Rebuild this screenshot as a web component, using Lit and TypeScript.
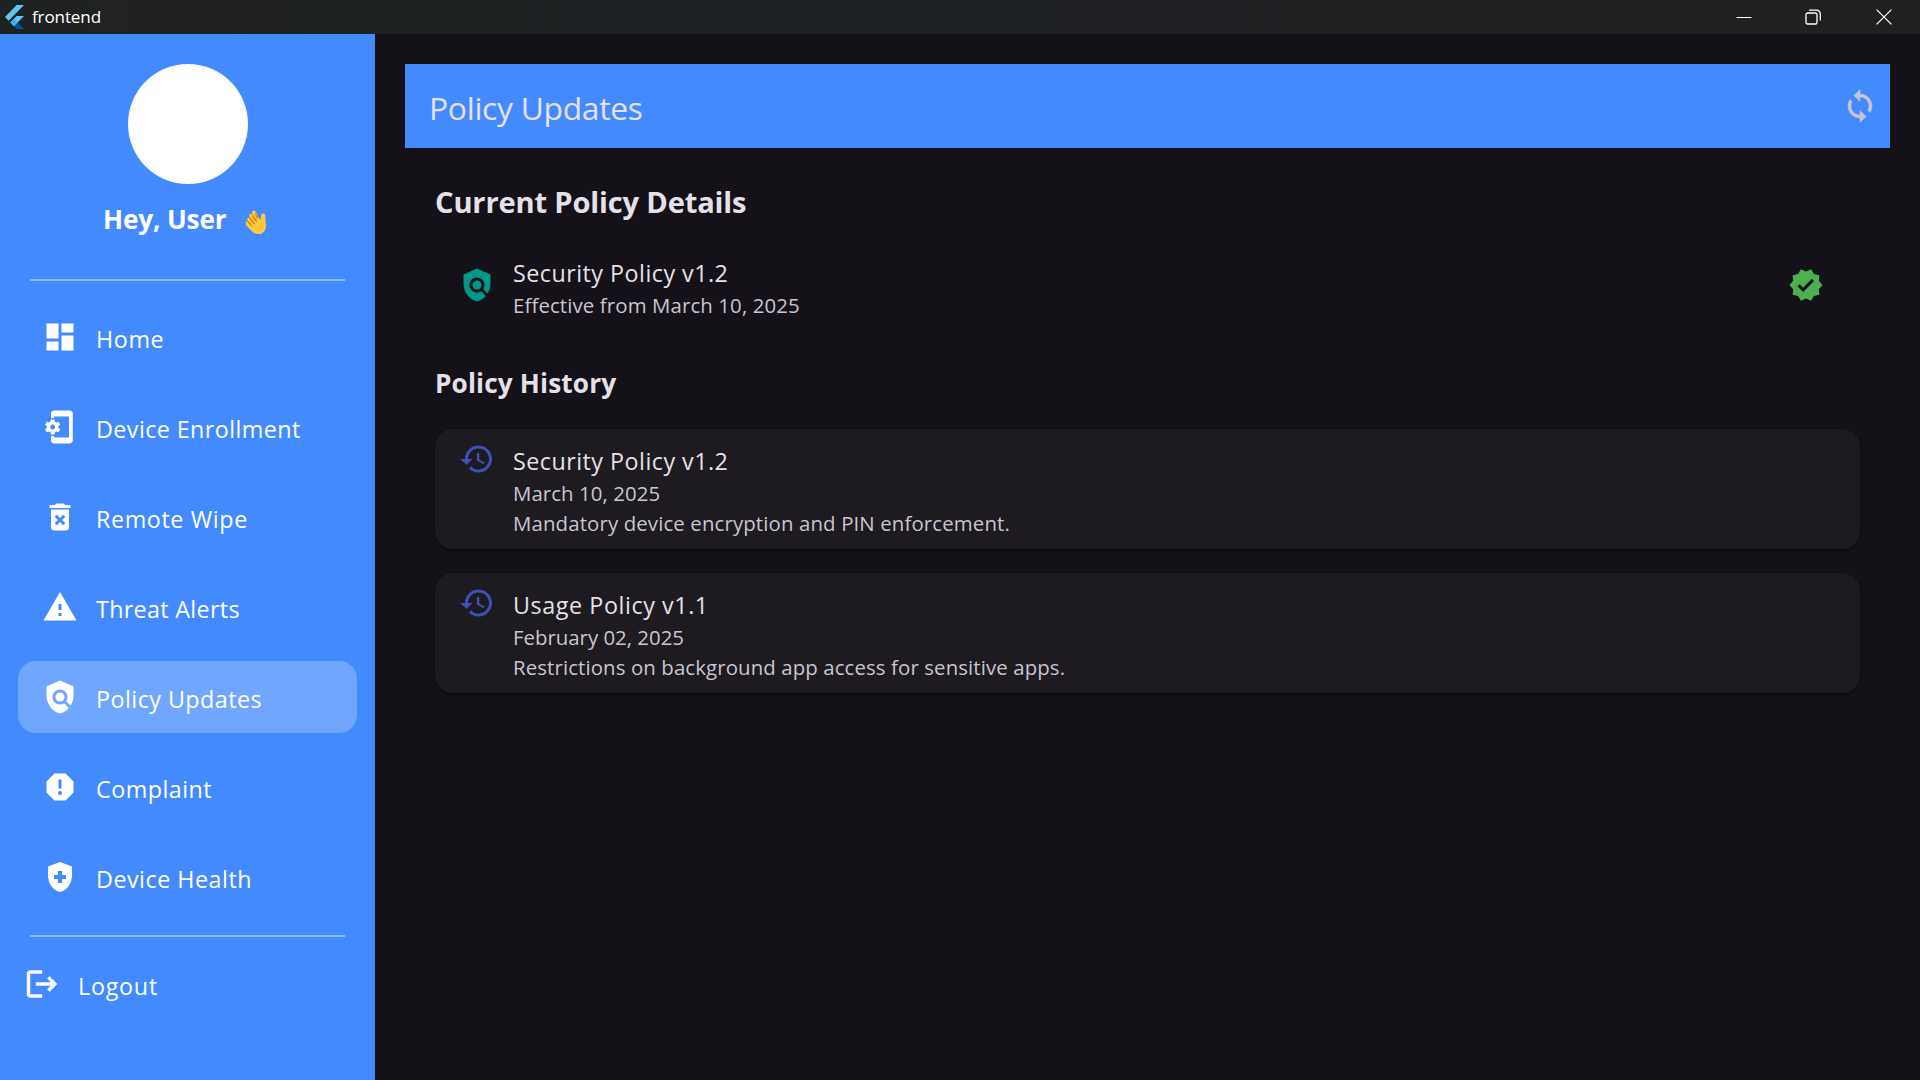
import { LitElement, html, css, svg, nothing } from "lit";
import { customElement, property, state } from "lit/decorators.js";
import { classMap } from "lit/directives/class-map.js";
import { styleMap } from "lit/directives/style-map.js";

const ICONS: Record<string, ReturnType<typeof svg>> = {
  dashboard: svg`<path d="M3 13h8V3H3v10zm0 8h8v-6H3v6zm10 0h8V11h-8v10zm0-18v6h8V3h-8z"/>`,
  phoneSetup: svg`<path d="M18.500 1H8c-1.100 0-2 .9-2 2v3h2V5h10v14H8v-1H6v3c0 1.100.9 2 2 2h10.500c1.100 0 2-.9 2-2V3c0-1.100-.9-2-2-2z"/><path transform="translate(-.9 0)" d="M11.8 12.5v-1l1.1-.8c.1-.1.1-.2.1-.3l-1-1.7c-.1-.1-.2-.2-.3-.1l-1.3.4c-.3-.2-.6-.4-.9-.5l-.2-1.3c0-.1-.1-.2-.3-.2H7c-.1 0-.2.1-.3.2l-.2 1.3c-.3.1-.6.3-.9.5l-1.3-.5c-.1 0-.2 0-.3.1l-1 1.7c-.1.1 0 .2.1.3l1.1.8v1l-1.1.9c-.1.1-.1.2-.1.3l1 1.7c.1.1.2.2.3.1l1.4-.4c.3.2.6.4.9.5l.2 1.3c-.1.1.1.2.2.2h2c.1 0 .2-.1.3-.2l.2-1.3c.3-.1.6-.3.9-.5l1.3.5c.1 0 .2 0 .3-.1l1-1.7c.1-.1 0-.2-.1-.3l-1.1-.9zM8 13.6c-.9 0-1.6-.7-1.6-1.6s.7-1.6 1.6-1.6 1.6.7 1.6 1.6-.7 1.6-1.6 1.6z"/>`,
  deleteForever: svg`<path d="M6 19c0 1.1.9 2 2 2h8c1.1 0 2-.9 2-2V7H6v12zm2.46-7.12l1.41-1.41L12 12.59l2.12-2.12 1.41 1.41L13.41 14l2.12 2.12-1.41 1.41L12 15.41l-2.12 2.12-1.41-1.41L10.59 14l-2.13-2.12zM15.5 4l-1-1h-5l-1 1H5v2h14V4z"/>`,
  warning: svg`<path d="M1 21h22L12 2 1 21zm12-3h-2v-2h2v2zm0-4h-2v-4h2v4z"/>`,
  policy: svg`<path d="M21 5l-9-4-9 4v6c0 5.55 3.84 10.74 9 12 2.3-.56 4.33-1.9 5.88-3.71l-3.12-3.12c-1.94 1.29-4.58 1.07-6.29-.64-1.95-1.95-1.95-5.12 0-7.07 1.95-1.95 5.12-1.95 7.07 0 1.71 1.71 1.92 4.35.64 6.29l2.9 2.9C20.29 15.69 21 13.38 21 11V5z"/><circle cx="12" cy="12" r="3"/>`,
  report: svg`<path d="M15.73 3H8.27L3 8.27v7.46L8.27 21h7.46L21 15.73V8.27L15.73 3zM12 17.3c-.72 0-1.3-.58-1.3-1.3 0-.72.58-1.3 1.3-1.3.72 0 1.3.58 1.3 1.3 0 .72-.58 1.3-1.3 1.3zm1-4.3h-2V7h2v6z"/>`,
  health: svg`<path fill-rule="evenodd" d="M12 2L4 5v6.09c0 5.05 3.41 9.76 8 10.91 4.59-1.15 8-5.86 8-10.91V5l-8-3zM10.6 8h2.8v2.6H16v2.8h-2.6V16h-2.8v-2.6H8v-2.8h2.6z"/>`,
  logout: svg`<path stroke="currentColor" stroke-width=".3" d="M17 7l-1.41 1.41L18.17 11H8v2h10.17l-2.58 2.58L17 17l5-5zM4 5h8V3H4c-1.1 0-2 .9-2 2v14c0 1.1.9 2 2 2h8v-2H4V5z"/>`,
  sync: svg`<path stroke="currentColor" stroke-width=".3" d="M12 4V1L8 5l4 4V6c3.31 0 6 2.69 6 6 0 1.01-.25 1.97-.7 2.8l1.46 1.46C19.54 15.03 20 13.57 20 12c0-4.42-3.58-8-8-8zm0 14c-3.31 0-6-2.69-6-6 0-1.01.25-1.97.7-2.8L5.24 7.74C4.46 8.97 4 10.43 4 12c0 4.42 3.58 8 8 8v3l4-4-4-4v3z"/>`,
  verified: svg`<path d="M23 12l-2.44-2.79.34-3.69-3.61-.82-1.89-3.2L12 2.96 8.6 1.5 6.71 4.69 3.1 5.5l.34 3.7L1 12l2.44 2.79-.34 3.7 3.61.82L8.6 22.5l3.4-1.47 3.4 1.46 1.89-3.19 3.61-.82-.34-3.69L23 12zm-12.91 4.72l-3.8-3.81 1.48-1.48 2.32 2.33 5.85-5.87 1.48 1.48-7.33 7.35z"/>`,
  history: svg`<path d="M13 3c-4.97 0-9 4.03-9 9H1l3.89 3.89.07.14L9 12H6c0-3.87 3.13-7 7-7s7 3.13 7 7-3.13 7-7 7c-1.93 0-3.68-.79-4.94-2.06l-1.42 1.42C8.27 19.99 10.51 21 13 21c4.97 0 9-4.03 9-9s-4.03-9-9-9zm-1 5v5l4.28 2.54.72-1.21-3.5-2.08V8H12z"/>`,
};

/** A line of text with its own tracking, in pixels. */
interface Label {
  text: string;
  tracking: number;
}

const label = (text: string, tracking: number): Label => ({ text, tracking });

const NAV: { icon: string; label: Label }[] = [
  { icon: "dashboard", label: label("Home", 0.6) },
  { icon: "phoneSetup", label: label("Device Enrollment", 0.42) },
  { icon: "deleteForever", label: label("Remote Wipe", 0.6) },
  { icon: "warning", label: label("Threat Alerts", 0.32) },
  { icon: "policy", label: label("Policy Updates", 0.46) },
  { icon: "report", label: label("Complaint", 0.47) },
  { icon: "health", label: label("Device Health", 0.5) },
];

const HISTORY: { title: Label; date: Label; note: Label }[] = [
  {
    title: label("Security Policy v1.2", 0.48),
    date: label("March 10, 2025", 0.08),
    note: label("Mandatory device encryption and PIN enforcement.", 0.13),
  },
  {
    title: label("Usage Policy v1.1", 0.58),
    date: label("February 02, 2025", 0),
    note: label("Restrictions on background app access for sensitive apps.", 0.11),
  },
];

const tracked = (l: Label) =>
  html`<span style=${styleMap({ letterSpacing: `${l.tracking}px` })}>${l.text}</span>`;

@customElement("md-icon")
class MdIcon extends LitElement {
  static styles = css`
    :host { display: block; flex: none; width: 36px; height: 36px; }
    svg { display: block; width: 100%; height: 100%; fill: currentColor; }
  `;
  @property() name = "";
  render() {
    return html`<svg viewBox="0 0 24 24" aria-hidden="true">${ICONS[this.name] ?? nothing}</svg>`;
  }
}

@customElement("title-bar")
class TitleBar extends LitElement {
  static styles = css`
    :host {
      display: flex; align-items: center; height: 34px; box-sizing: border-box;
      padding: 0 28px 0 5px; color: #fff;
      background: linear-gradient(90deg, #1e2222 0, #212121 130px, #1d2122 400px, #1c2224 900px, #1f2023 1100px, #202020 1920px);
    }
    .logo { width: 19px; height: 24px; flex: none; }
    .name { font-size: 17.1px; letter-spacing: -0.15px; line-height: 24px; margin-left: 8px; flex: 1; }
    .controls { display: flex; margin-bottom: 1px; }
    .control { width: 16px; height: 16px; fill: none; stroke: #fff; }
    .control + .control { margin-left: 53px; }
    .control:last-child { margin-left: 55px; }
  `;
  render() {
    return html`
      <svg class="logo" viewBox="0 0 256 316" preserveAspectRatio="none" aria-hidden="true">
        <path fill="#5cc8f8" d="M157.7 0 0 157.7l48.8 48.8L255.3 0z" />
        <path fill="#5cc8f8" d="M156.6 145.4 72.2 229.8l49.1 49.3 48.8-48.5 85.2-85.2z" />
        <path fill="#00569e" d="m121.5 279.1 36.2 36.1h97.6l-85.2-84.6z" />
        <path fill="#29b6f6" d="m71.6 230.4 48.8-48.8 49.7 49-48.8 48.5z" />
      </svg>
      <span class="name">frontend</span>
      <div class="controls">
        <svg class="control" viewBox="0 0 16 16"><path d="M0.5 8.5h15" /></svg>
        <svg class="control" viewBox="0 0 16 16">
          <rect x="1" y="4" width="11" height="11" rx="1.6" stroke-width="1.3" />
          <path d="M4 1.2h7.5a3.8 3.8 0 0 1 3.8 3.8v6.6" stroke-width="1.3" />
        </svg>
        <svg class="control" viewBox="0 0 16 16"><path d="m.6.6 14.8 14.8M15.4.6.6 15.4" stroke-width="1.3" /></svg>
      </div>
    `;
  }
}

@customElement("side-nav")
class SideNav extends LitElement {
  static styles = css`
    :host {
      display: flex; flex-direction: column; width: 375px; flex: none; box-sizing: border-box;
      padding-top: 30px; background: #448aff; color: #fff;
    }
    .avatar { width: 120px; height: 120px; border-radius: 50%; background: #fff; align-self: center; }
    .greeting {
      display: flex; align-items: center; height: 36px; margin: 17px 0 42px 103px;
      font-size: 26.2px; font-weight: 700; line-height: 36px;
    }
    .wave { width: 30px; height: 30px; margin: 2px 0 0 12px; }
    .divider { height: 2px; margin: 0 30px; background: #8fb8ff; }
    .items { display: flex; flex-direction: column; gap: 18px; padding: 20px 18px 22px; }
    .item {
      display: flex; align-items: center; gap: 18px; height: 72px; padding: 0 24px;
      border-radius: 18px; font-size: 23.3px; line-height: 32px;
    }
    .item.active { background: #71a6ff; }
    .label { padding-top: 4px; white-space: nowrap; }
    .logout { margin-top: 11px; }
  `;
  @state() private selected = 4;
  render() {
    return html`
      <div class="avatar"></div>
      <div class="greeting">
        ${tracked(label("Hey, User", -0.15))}
        <svg class="wave" viewBox="0 0 30 30" role="img" aria-label="Waving hand">
          <g fill="none" stroke="#3f7df6" stroke-width="1.1" stroke-linecap="round" opacity=".6">
            <path d="M1 18c-.6 3 1 5.600 4 6.300M3.500 17.500c0 2 .8 3.300 2.500 4M15 1.500c3-1 5.400.4 6.500 3M14.800 4c2-.6 3.300.2 4 1.600" />
          </g>
          <path fill="#ffc83d" d="M7.200 18.800c-1.400-1.800.4-3.800 2.200-2.400l-.7-.9c-1.500-2.200.9-4.300 2.600-2.300l-.8-1.300c-1.300-2.400 1.500-4.400 3-2.200l.7 1-.9-2.200c-1-2.700 2.200-4 3.400-1.700l4.500 8.200c.6-1.300.8-2.900 1-4.700.3-2.900 3.900-2.700 4.100.2.200 2.700-.1 4.800.6 8 .9 4.400-.7 8.300-4.200 9.900-3.500 1.500-7.100.5-10-2.500l-5-4.800c-1-1-1-1.800-.5-2.300z" />
          <g fill="none" stroke="#d67d00" stroke-width="1.300" stroke-linecap="round">
            <path d="m8.800 16.500 3.600 4.100M11 13.200l4.200 5.200M13.700 10.600l3.600 5.500M16.500 9l2 3.900" />
          </g>
        </svg>
      </div>
      <div class="divider"></div>
      <nav class="items">
        ${NAV.map(
          (n, i) => html`<div class=${classMap({ item: true, active: i === this.selected })} @click=${() => (this.selected = i)}>
            <md-icon name=${n.icon}></md-icon><span class="label">${tracked(n.label)}</span>
          </div>`,
        )}
      </nav>
      <div class="divider"></div>
      <div class="item logout">
        <md-icon name="logout"></md-icon><span class="label">${tracked(label("Logout", 0.75))}</span>
      </div>
    `;
  }
}

@customElement("app-root")
class AppRoot extends LitElement {
  static styles = css`
    :host {
      display: flex; flex-direction: column; height: 100vh; overflow: hidden;
      background: #141218; color: #e6e0e9; font-family: "Open Sans", "Noto Sans", sans-serif;
    }
    .body { display: flex; flex: 1; min-height: 0; }
    main { flex: 1; min-width: 0; padding: 30px; }
    .app-bar {
      display: flex; align-items: center; justify-content: space-between; height: 84px;
      box-sizing: border-box; padding: 0 12px 0 24px; background: #448aff;
    }
    .app-title { font-size: 31.8px; line-height: 44px; padding-top: 3px; }
    .sync { color: #cac4d0; }
    .content { padding: 34px 30px 0; }
    h2 { margin: 0; font-weight: 700; white-space: nowrap; }
    .current-heading { font-size: 29.1px; line-height: 40px; }
    .history-heading { font-size: 26.2px; line-height: 36px; margin-bottom: 28px; }
    .policy { display: flex; gap: 18px; padding: 34px 36px 45px 24px; }
    .policy md-icon { margin-top: 11px; }
    .shield { color: #009688; }
    .verified { color: #4caf50; }
    .text { flex: 1; white-space: nowrap; }
    .title { font-size: 23.3px; line-height: 34px; }
    .sub { font-size: 20.4px; line-height: 30px; color: #cac4d0; }
    .cards { display: flex; flex-direction: column; gap: 24px; }
    .card {
      display: flex; gap: 18px; height: 120px; box-sizing: border-box; padding: 15px 24px 0;
      border-radius: 18px; background: #1d1b20;
      box-shadow: 0 2px 3px rgba(0, 0, 0, 0.25), 0 1px 3px rgba(0, 0, 0, 0.1);
    }
    .card md-icon { margin-top: -3px; color: #3f51b5; }
  `;
  render() {
    return html`
      <title-bar></title-bar>
      <div class="body">
        <side-nav></side-nav>
        <main>
          <header class="app-bar">
            <span class="app-title">${tracked(label("Policy Updates", -0.3))}</span>
            <md-icon class="sync" name="sync"></md-icon>
          </header>
          <div class="content">
            <h2 class="current-heading">${tracked(label("Current Policy Details", -0.16))}</h2>
            <div class="policy">
              <md-icon class="shield" name="policy"></md-icon>
              <div class="text">
                <div class="title">${tracked(label("Security Policy v1.2", 0.48))}</div>
                <div class="sub">${tracked(label("Effective from March 10, 2025", 0.12))}</div>
              </div>
              <md-icon class="verified" name="verified"></md-icon>
            </div>
            <h2 class="history-heading">${tracked(label("Policy History", 0.15))}</h2>
            <div class="cards">
              ${HISTORY.map(
                (h) => html`<article class="card">
                  <md-icon name="history"></md-icon>
                  <div class="text">
                    <div class="title">${tracked(h.title)}</div>
                    <div class="sub">${tracked(h.date)}</div>
                    <div class="sub">${tracked(h.note)}</div>
                  </div>
                </article>`,
              )}
            </div>
          </div>
        </main>
      </div>
    `;
  }
}
